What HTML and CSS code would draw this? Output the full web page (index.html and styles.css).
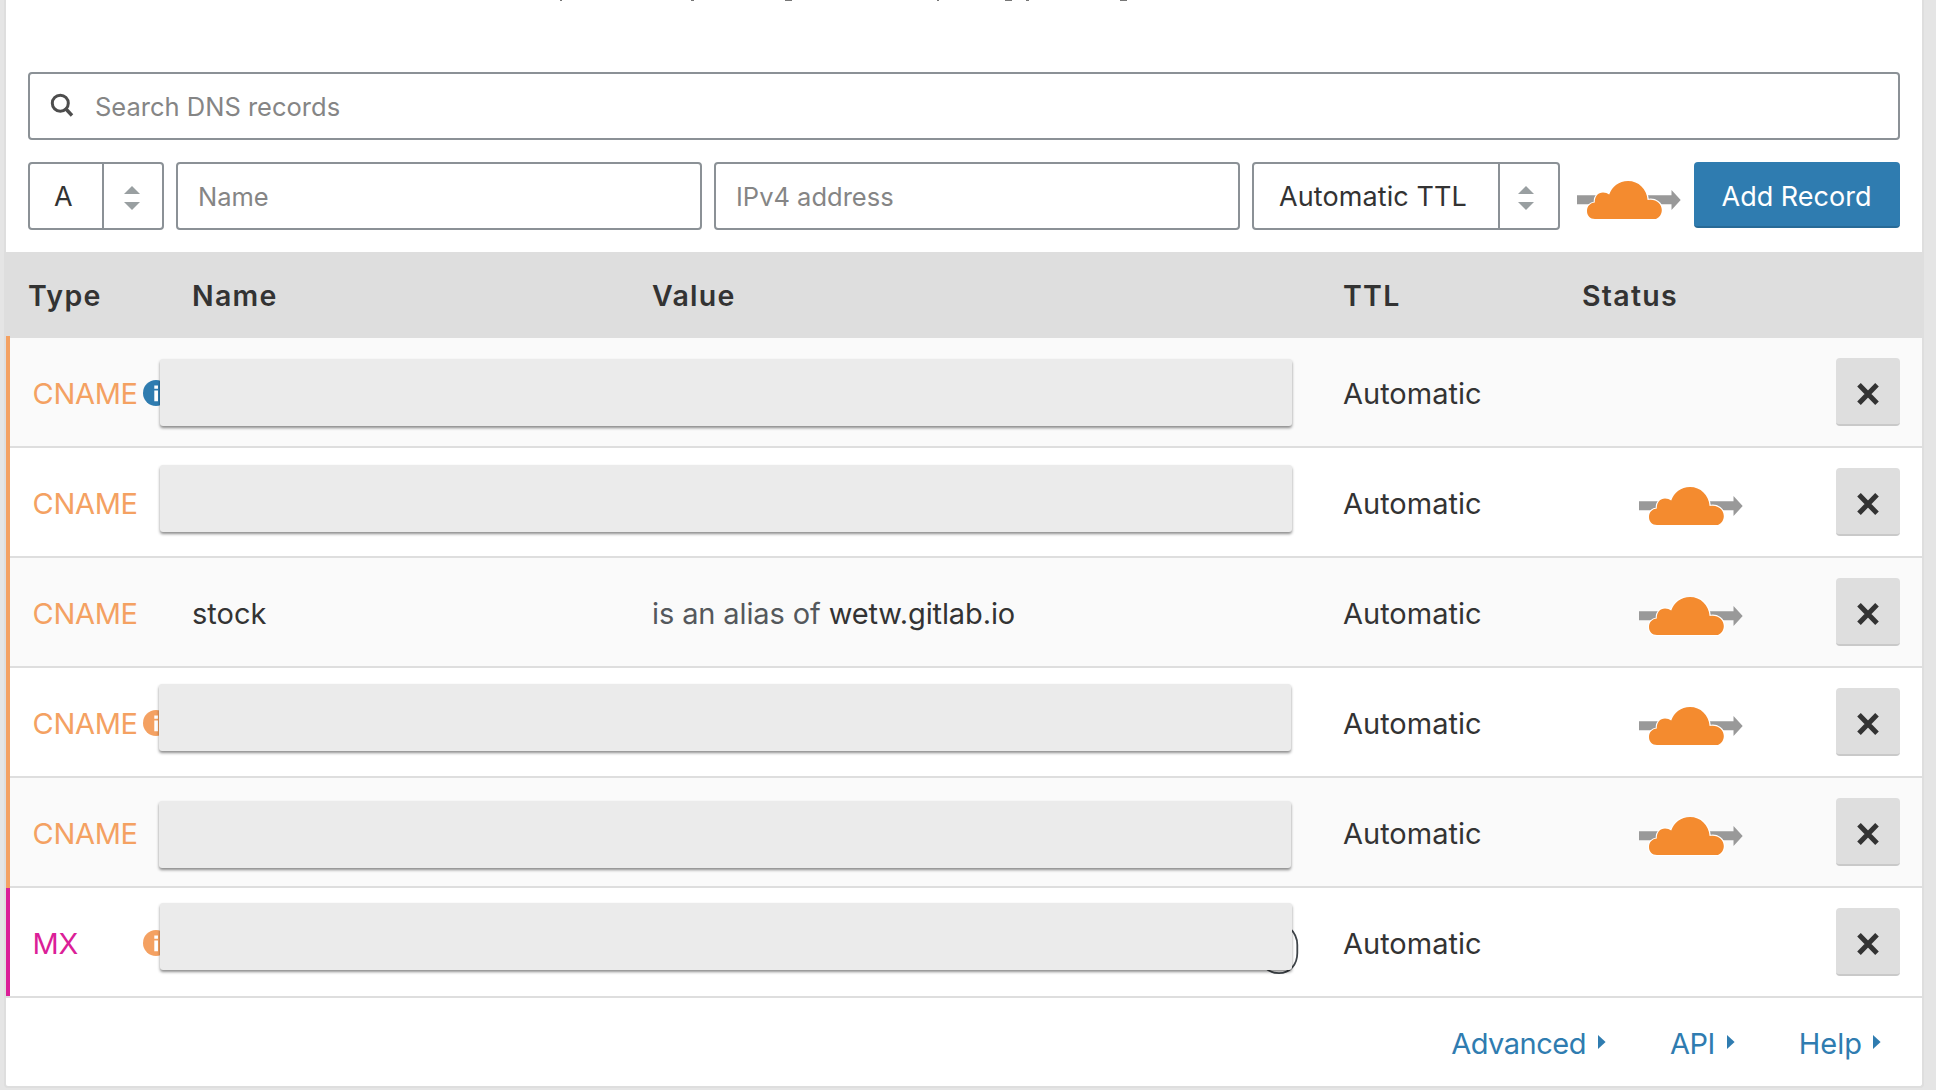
FILE: index.html
```html
<!DOCTYPE html>
<html lang="en">
<head>
<meta charset="utf-8">
<title>DNS Records</title>
<link rel="stylesheet" href="styles.css">
</head>
<body>
<svg class="defs" width="0" height="0" aria-hidden="true">
  <symbol id="cloud" viewBox="0 0 104 39">
    <path fill="#999" d="M0 14.3H94.5V9L103.7 19 94.5 29V23.3H0z"/>
    <path fill="#f48b2f" stroke="#fff" stroke-width="2.4" paint-order="stroke" d="M18 38C13 38 10 34.500 10 30C10 25.500 13 22 17.800 21.600C17.500 15.500 21 11.400 26 11.400C28.500 11.400 30.500 12.100 32.200 13.600C35 5.500 42 0 51 0C61.500 0 70 8 70.600 19.100C78.500 17.500 84.800 22.500 84.800 29C84.800 33 82.500 36.500 79 38z"/>
  </symbol>
  <symbol id="cross" viewBox="0 0 24 24">
    <path fill="none" stroke="#333" stroke-width="5" d="M3 2.700L21 21.300M21 2.700L3 21.300"/>
  </symbol>
  <symbol id="info" viewBox="0 0 26 26">
    <circle cx="13" cy="13" r="13" fill="currentColor"/>
    <path fill="#fff" d="M11.300 5.400h3.700v3.300h-3.700zM11.300 10.600h3.700v10.600h-3.700z"/>
  </symbol>
  <symbol id="sort" viewBox="0 0 16 24">
    <path fill="#999fa1" d="M8 0L16 8H0zM0 16H16L8 24z"/>
  </symbol>
  <symbol id="caret" viewBox="0 0 8 14">
    <path fill="currentColor" d="M0 0L7.600 7 0 14z"/>
  </symbol>
</svg>

<main class="panel">
  <div class="intro">
    <svg width="600" height="2" viewBox="550 0 600 2"><path fill="#777" d="M560 0h2v1h-2zM691 0h3v1h-3zM785 0h7v1h-7zM937 0h2v1h-2zM1005 0h7v1h-7zM1026 0h3v1h-3zM1120 0h7v1h-7z"/></svg>
  </div>

  <div class="search field">
    <svg class="search-icon" width="24" height="25" viewBox="0 0 24 25"><circle cx="10.300" cy="10.200" r="8" fill="none" stroke="#4d4d4d" stroke-width="3"/><path stroke="#4d4d4d" stroke-width="3.400" d="M15.500 15.500L22 22.500"/></svg>
    <span>Search DNS records</span>
  </div>

  <div class="add-form">
    <div class="select select-type"><span class="select-label">A</span><span class="select-arrows"><svg width="16" height="24"><use href="#sort"/></svg></span></div>
    <div class="field grow"><span>Name</span></div>
    <div class="field grow"><span>IPv4 address</span></div>
    <div class="select select-ttl"><span class="select-label">Automatic TTL</span><span class="select-arrows"><svg width="16" height="24"><use href="#sort"/></svg></span></div>
    <svg class="form-cloud" width="104" height="39"><use href="#cloud"/></svg>
    <button class="primary">Add Record</button>
  </div>

  <div class="grid header">
    <span>Type</span><span>Name</span><span>Value</span><span>TTL</span><span>Status</span>
  </div>

  <div class="grid row cname odd">
    <span class="type">CNAME</span><span></span><span></span><span>Automatic</span><span></span>
    <button class="remove"><svg width="24" height="24"><use href="#cross"/></svg></button>
    <svg class="info blue" width="26" height="26"><use href="#info"/></svg>
    <i class="mask m1"></i>
  </div>
  <div class="grid row cname">
    <span class="type">CNAME</span><span></span><span></span><span>Automatic</span>
    <span class="status"><svg width="104" height="39"><use href="#cloud"/></svg></span>
    <button class="remove"><svg width="24" height="24"><use href="#cross"/></svg></button>
    <i class="mask m2"></i>
  </div>
  <div class="grid row cname odd">
    <span class="type">CNAME</span><span>stock</span><span class="value"><span class="muted">is an alias of</span> <span class="host">wetw.gitlab.io</span></span><span>Automatic</span>
    <span class="status"><svg width="104" height="39"><use href="#cloud"/></svg></span>
    <button class="remove"><svg width="24" height="24"><use href="#cross"/></svg></button>
  </div>
  <div class="grid row cname">
    <span class="type">CNAME</span><span></span><span></span><span>Automatic</span>
    <span class="status"><svg width="104" height="39"><use href="#cloud"/></svg></span>
    <button class="remove"><svg width="24" height="24"><use href="#cross"/></svg></button>
    <svg class="info" width="26" height="26"><use href="#info"/></svg>
    <i class="mask m4"></i>
  </div>
  <div class="grid row cname odd">
    <span class="type">CNAME</span><span></span><span></span><span>Automatic</span>
    <span class="status"><svg width="104" height="39"><use href="#cloud"/></svg></span>
    <button class="remove"><svg width="24" height="24"><use href="#cross"/></svg></button>
    <i class="mask m5"></i>
  </div>
  <div class="grid row mx">
    <span class="type">MX</span><span></span><span></span><span>Automatic</span><span></span>
    <button class="remove"><svg width="24" height="24"><use href="#cross"/></svg></button>
    <svg class="info" width="26" height="26"><use href="#info"/></svg>
    <svg class="pill-edge" width="40" height="50" viewBox="1260 926 40 50"><path fill="none" stroke="#3f454a" stroke-width="1.800" d="M1290 928.500C1295 933 1297.300 939 1297.300 945V953C1297.300 964.500 1290 973.200 1279 973.200C1274 973.200 1269.500 971.500 1266 968.500"/></svg>
    <i class="mask m6"></i>
  </div>

  <div class="footer">
    <a class="tight">Advanced<svg width="8" height="14"><use href="#caret"/></svg></a>
    <a class="tight">API<svg width="8" height="14"><use href="#caret"/></svg></a>
    <a>Help<svg width="8" height="14"><use href="#caret"/></svg></a>
  </div>
</main>
</body>
</html>
```
FILE: styles.css
```css
* { box-sizing: border-box; }
body {
  margin: 0;
  height: 1090px;
  overflow: hidden;
  background: #e5e5e5;
  color: #333;
  font-family: Inter, "Liberation Sans", sans-serif;
  font-size: 29px;
  line-height: 36px;
}
svg { display: block; flex: none; }
.defs { position: absolute; }
button { font: inherit; border: 0; padding: 0; }

.panel {
  width: 1920px;
  height: 1088px;
  margin-left: 4px;
  background: #fff;
  border: solid #dedede;
  border-width: 0 2px 2px;
  border-radius: 0 0 4px 4px;
}
.intro { height: 72px; padding-left: 544px; }

.field {
  display: flex;
  align-items: center;
  height: 68px;
  padding: 1px 0 0 20px;
  border: 2px solid #8b9196;
  border-radius: 4px;
  color: #858585;
  font-size: 25.5px;
}
.search { margin: 0 22px; gap: 21px; }
.search-icon { margin-top: -3px; }

.add-form {
  display: flex;
  height: 90px;
  margin-top: 22px;
  padding: 0 22px;
  gap: 12px;
}
.grow { flex: 1; }
.select {
  display: flex;
  height: 68px;
  border: 2px solid #8b9196;
  border-radius: 4px;
  font-size: 27px;
}
.select-type { width: 136px; }
.select-ttl { width: 308px; letter-spacing: 0.1px; }
.select-label { flex: 1; padding: 15px 0 0 25px; white-space: nowrap; }
.select-type .select-label { padding-left: 24px; }
.select-arrows {
  display: flex;
  align-items: center;
  justify-content: center;
  width: 60px;
  padding-right: 6px;
  border-left: 2px solid #8b9196;
}
.select-type .select-arrows { padding-right: 2px; }
.form-cloud { margin: 19px -11px 0 5px; }
.select-arrows svg { margin-top: 4px; }
.primary {
  width: 206px;
  height: 66px;
  margin-left: 12px;
  padding: 5px 1px 0 0;
  background: #2f7cb0;
  border-bottom: 2px solid #286a96;
  border-radius: 4px;
  color: #fff;
  font-size: 27px;
}

.grid {
  display: grid;
  grid-template-columns: 164px 460px 691px 239px 1fr 64px;
  align-items: center;
  padding: 0 22px;
}
.header {
  height: 86px;
  padding-top: 1px;
  background: #dedede;
  font-size: 28.5px;
  font-weight: 600;
  letter-spacing: 1.3px;
}

.row {
  position: relative;
  height: 110px;
  border-bottom: 2px solid #dedede;
}
.odd { background: #fafafa; }
.row > span { padding-top: 3px; }
.row::before {
  content: "";
  position: absolute;
  left: 0;
  top: -2px;
  bottom: -2px;
  width: 4px;
  background: #f4a162;
}
.mx::before { top: 0; bottom: 0; background: #db1f98; }
.row .type { padding-left: 4.5px; letter-spacing: -0.3px; }
.cname .type { color: #f4a162; }
.mx .type { color: #db1f98; }
.value { letter-spacing: -0.12px; }
.muted { color: #54585c; }
.row .status { padding: 9px 0 0 57px; }
.remove {
  display: flex;
  align-items: center;
  justify-content: center;
  width: 64px;
  height: 68px;
  padding-top: 5px;
  background: #dedede;
  border-bottom: 2px solid #c9c9c9;
  border-radius: 4px;
}

.info { position: absolute; left: 136.5px; top: 42px; color: #f4a162; }
.blue { color: #2f7cb0; }
.mask {
  position: absolute;
  left: 154px;
  width: 1132px;
  height: 67px;
  background: #ebebeb;
  border-radius: 3px;
  box-shadow: 0 2px 3px rgba(0, 0, 0, 0.45);
}
.m1 { top: 21px; }
.m2 { top: 17px; }
.m4 { top: 16px; left: 153px; }
.m5 { top: 23px; left: 153px; }
.m6 { top: 15px; }
.pill-edge { position: absolute; left: 1254px; top: 38px; }

.footer {
  display: flex;
  justify-content: flex-end;
  align-items: center;
  gap: 65px;
  height: 88px;
  padding: 4px 41px 0 0;
  color: #2f7cb0;
}
.footer a { display: flex; align-items: center; gap: 11px; }
.footer svg { margin-top: -4px; }
.tight { letter-spacing: -0.5px; }
.footer .tight svg { margin-left: 1px; margin-right: -1px; }
```
